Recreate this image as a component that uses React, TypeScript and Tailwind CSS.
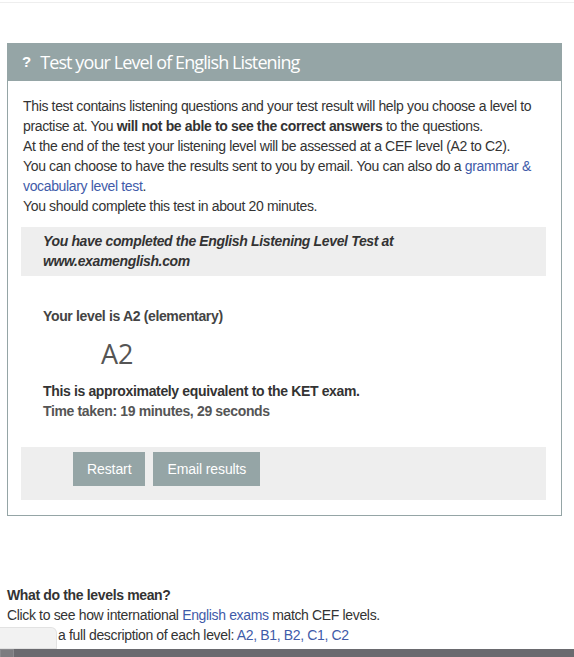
import React from "react"

const link = "text-[#3f5ba9]"

export default function App() {
  return (
    <div className="relative min-h-[657px] bg-white font-['Liberation_Sans',Arial,sans-serif] text-[14px] leading-[20px] tracking-[-0.35px] text-[#333]">
      <div className="mt-[2px] h-[1px] bg-[#eeeeee]" />

      {/* panel */}
      <div className="ml-[7px] mt-[40px] w-[555px]">
        <div className="flex h-[38px] items-center bg-[#95a5a6] pl-[15px] font-['Open_Sans',sans-serif] text-[18px] text-white">
          <span className="mr-[9px] font-['Liberation_Sans',Arial,sans-serif] text-[15px] font-bold tracking-normal">?</span>
          <span className="tracking-[-0.9px]">Test your Level of English Listening</span>
        </div>
        <div className="border border-t-0 border-[#95a5a6] pb-[15px] pl-[13px] pr-[15px] pt-[15px]">
          <p className="ml-[2px]">
            This test contains listening questions and your test result will help you choose a level to practise at. You{" "}
            <b>will not be able to see the correct answers</b> to the questions.
            <br />
            At the end of the test your listening level will be assessed at a CEF level (A2 to C2).
            <br />
            You can choose to have the results sent to you by email. You can also do a{" "}
            <span className={link}>grammar &amp; vocabulary level test</span>.
            <br />
            You should complete this test in about 20 minutes.
          </p>

          <div className="mt-[11px] bg-[#eeeeee] pb-[5px] pl-[22px] pt-[4px] font-bold italic">
            You have completed the English Listening Level Test at
            <br />
            www.examenglish.com
          </div>

          <div className="pl-[22px] pt-[30px]">
            <p className="font-bold text-[#444]">Your level is A2 (elementary)</p>
            <div className="flex h-[55px] items-center pl-[58px] font-['Open_Sans',sans-serif] text-[27px] tracking-normal text-[#555]">
              A2
            </div>
            <p className="font-bold">This is approximately equivalent to the KET exam.</p>
            <p className="font-bold text-[#555]">Time taken: 19 minutes, 29 seconds</p>
          </div>

          <div className="mt-[26px] flex gap-[8px] bg-[#eeeeee] pb-[14px] pl-[52px] pt-[5px]">
            <button className="h-[34px] bg-[#95a5a6] px-[14px] tracking-[-0.1px] text-white">Restart</button>
            <button className="h-[34px] bg-[#95a5a6] px-[14px] tracking-[-0.1px] text-white">Email results</button>
          </div>
        </div>
      </div>

      {/* levels */}
      <div className="ml-[7px] mt-[69px]">
        <p className="font-bold">What do the levels mean?</p>
        <p>
          Click to see how international <span className={link}>English exams</span> match CEF levels.
        </p>
        <p>
          Click for a full description of each level: <span className={link}>A2, B1, B2, C1, C2</span>
        </p>
      </div>

      {/* overlay tab and bottom bar */}
      <div className="absolute left-0 top-[625px] h-[22px] w-[57px] rounded-tr-[6px] border border-l-0 border-[#e2e2e2] bg-[#f2f2f2]" />
      <div className="absolute bottom-0 left-0 right-0 flex h-[10px] bg-[#6a6a6f]">
        <div className="h-[10px] w-[14px] border border-[#8a8a8e] bg-[#7c7c80]" />
      </div>
    </div>
  )
}
